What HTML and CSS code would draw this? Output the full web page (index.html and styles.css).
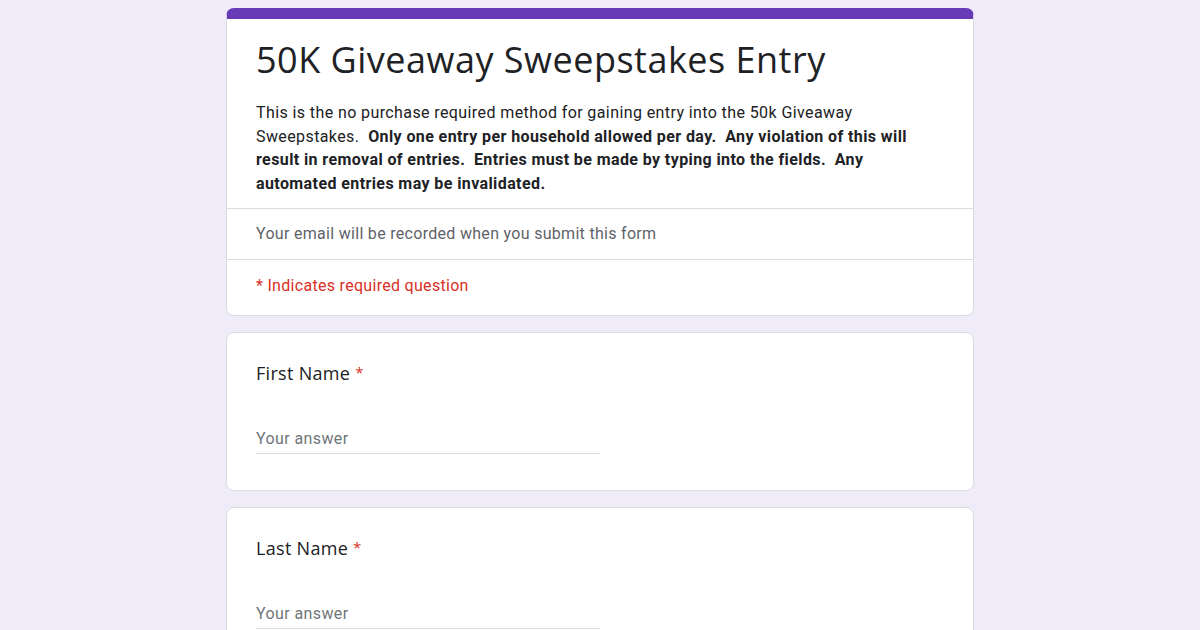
FILE: index.html
```html
<!DOCTYPE html>
<html lang="en">
<head>
    <meta charset="UTF-8">
    <meta name="viewport" content="width=device-width, initial-scale=1.0">
    <title>50K Giveaway Sweepstakes Entry</title>
    <link rel="stylesheet" href="styles.css">
</head>
<body>
    <div class="form">
        <div class="card header">
            <div class="intro">
                <h1>50K Giveaway Sweepstakes Entry</h1>
                <p class="desc">This is the no purchase required method for gaining entry into the 50k Giveaway Sweepstakes.&nbsp; <b>Only one entry per household allowed per day.&nbsp; Any violation of this will result in removal of entries.&nbsp; Entries must be made by typing into the fields.&nbsp; Any automated entries may be invalidated.</b></p>
            </div>
            <div class="row email">Your email will be recorded when you submit this form</div>
            <div class="row required">* Indicates required question</div>
        </div>

        <div class="card question">
            <div class="label">First Name <span class="star">*</span></div>
            <input class="answer" type="text" placeholder="Your answer">
        </div>

        <div class="card question">
            <div class="label">Last Name <span class="star">*</span></div>
            <input class="answer" type="text" placeholder="Your answer">
        </div>
    </div>
</body>
</html>
```

FILE: styles.css
```css
body {
    margin: 0;
    background-color: #f0ebf8;
    font-family: Roboto, Arial, sans-serif;
    color: #202124;
}
.form {
    width: 748px;
    margin: 8px auto 0;
    display: flex;
    flex-direction: column;
    gap: 16px;
}
.card {
    background-color: white;
    border: 1px solid #dadce0;
    border-radius: 8px;
}
.header {
    border-top: 11px solid #673ab7;
}
.intro {
    padding: 16px 29px 13px;
    border-bottom: 1px solid #dadce0;
}
h1 {
    margin: 0;
    font-family: "Open Sans", Arial, sans-serif;
    font-weight: 400;
    font-size: 36px;
    line-height: 50px;
    letter-spacing: 0.5px;
}
.desc {
    max-width: 672px;
    margin: 16px 0 0;
    font-size: 16px;
    line-height: 23.5px;
    letter-spacing: 0.4px;
}
.desc b {
    font-weight: 700;
}
.row {
    padding: 0 29px;
    font-size: 16px;
    letter-spacing: 0.3px;
}
.email {
    height: 50px;
    line-height: 50px;
    color: #5f6368;
    border-bottom: 1px solid #dadce0;
}
.required {
    height: 55px;
    line-height: 52px;
    color: #d93025;
}
.question {
    padding: 26px 29px 36px;
}
.label {
    font-family: "Open Sans", Arial, sans-serif;
    font-size: 18px;
    line-height: 26px;
    letter-spacing: 0.3px;
}
.star {
    color: #d93025;
    font-size: 15px;
    vertical-align: 2px;
}
.answer {
    display: block;
    width: 50%;
    margin-top: 42px;
    padding: 0 0 3px;
    border: none;
    border-bottom: 1px solid #dadce0;
    font-family: Roboto, Arial, sans-serif;
    font-size: 16px;
    line-height: 22px;
    letter-spacing: 0.4px;
    color: #202124;
    outline: none;
    background: transparent;
}
.answer::placeholder {
    color: #70757a;
}
```
